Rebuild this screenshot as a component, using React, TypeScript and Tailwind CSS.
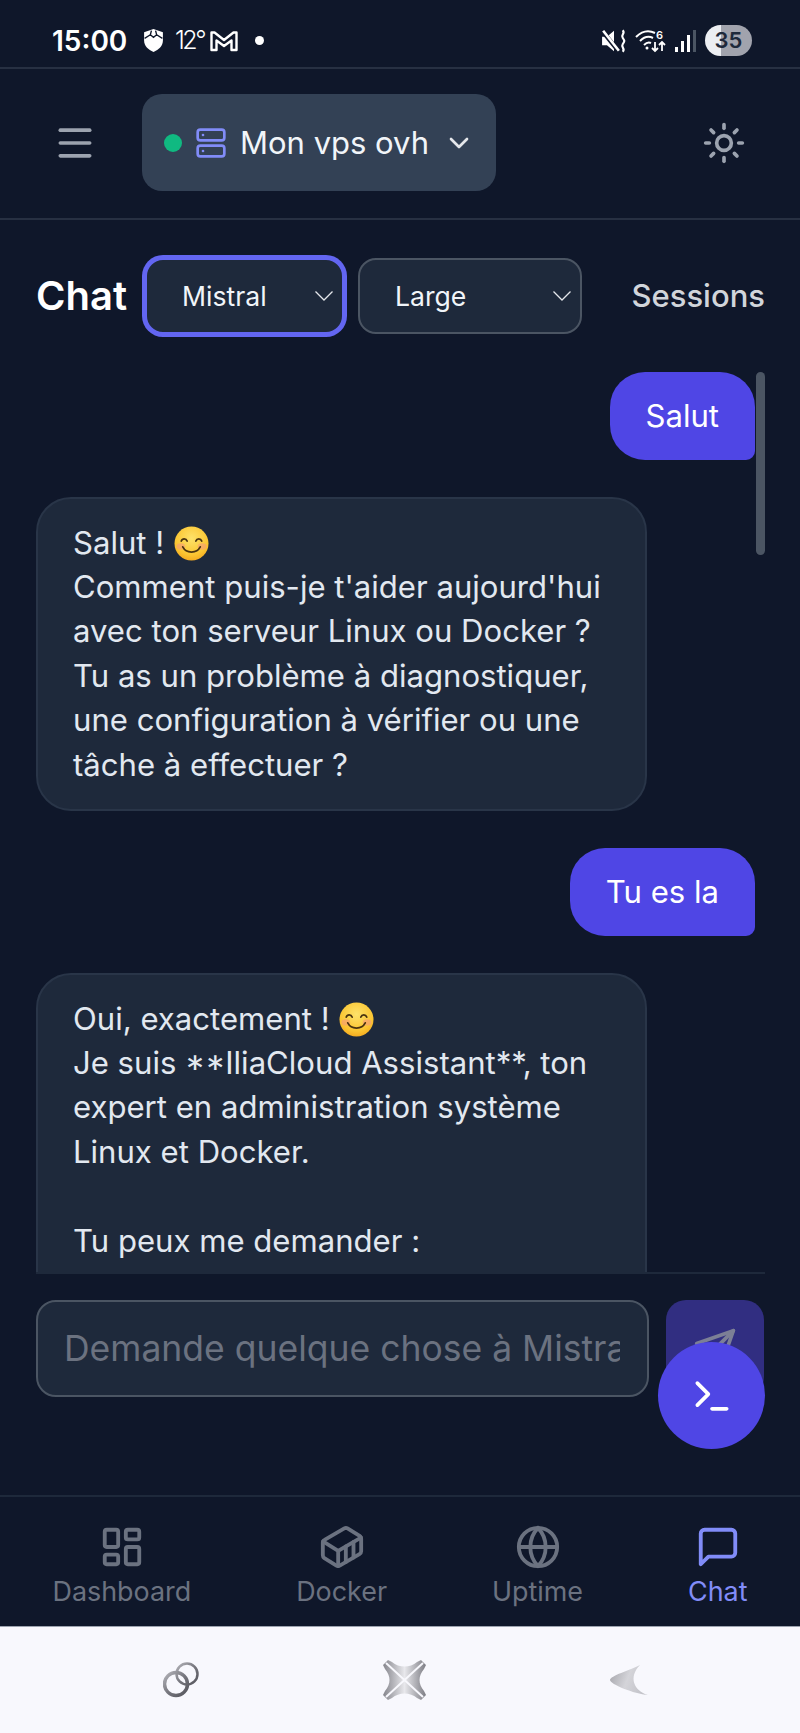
import { ChevronDown, Container, Globe, LayoutDashboard, Menu, Server, Sun, Terminal } from "lucide-react";
import type { LucideProps } from "lucide-react";
import type { ReactNode } from "react";

function ChatBubbleIcon({ size }: LucideProps) {
  return (
    <svg viewBox="0 0 24 24" width={size} height={size} fill="none" stroke="currentColor" strokeWidth="2" strokeLinecap="round" strokeLinejoin="round">
      <path d="M21 15a2 2 0 0 1-2 2H7l-4 4V5a2 2 0 0 1 2-2h14a2 2 0 0 1 2 2z" />
    </svg>
  );
}

function SendIcon() {
  return (
    <svg viewBox="0 0 24 24" width={44} height={44} fill="none" stroke="#7c7f96" strokeWidth="2" strokeLinecap="round" strokeLinejoin="round">
      <path d="m22 2-7 20-4-9-9-4Z" />
      <path d="M22 2 11 13" />
    </svg>
  );
}

function Smile() {
  return (
    <svg viewBox="0 0 36 36" className="inline-block ml-[1px] w-[35px] h-[35px] align-[-7px]">
      <defs>
        <radialGradient id="smileFace" cx="50%" cy="35%" r="70%">
          <stop offset="0%" stopColor="#fde26a" />
          <stop offset="70%" stopColor="#fbc531" />
          <stop offset="100%" stopColor="#f3a51c" />
        </radialGradient>
      </defs>
      <circle cx="18" cy="18" r="17.5" fill="url(#smileFace)" />
      <ellipse cx="7" cy="21" rx="4.5" ry="3.2" fill="#f59a7a" opacity="0.6" />
      <ellipse cx="29" cy="21" rx="4.5" ry="3.2" fill="#f59a7a" opacity="0.6" />
      <path d="M7.5 15.5c1-3 5-3 6 0M22.5 15.5c1-3 5-3 6 0" fill="none" stroke="#4a3410" strokeWidth="1.8" strokeLinecap="round" />
      <path d="M9 21.5c3.5 7 14.5 7 18 0" fill="none" stroke="#4a3410" strokeWidth="1.8" strokeLinecap="round" />
    </svg>
  );
}

function SelectBox({ label, className }: { label: string; className: string }) {
  return (
    <div className={`flex items-center justify-between h-[76px] pr-[9px] rounded-[18px] bg-[#1e293b] border-2 text-[26.6px] text-[#f1f5f9] ${className}`}>
      <span className="mt-[2px]">{label}</span>
      <svg viewBox="0 0 18 10" className="w-[18px] h-[10px]" fill="none" stroke="#e5e7eb" strokeWidth="1.3">
        <path d="M0.5 0.5 9 9 17.5 0.5" />
      </svg>
    </div>
  );
}

function AssistantBubble({ children }: { children: ReactNode }) {
  return (
    <div className="w-[611px] shrink-0 pl-[35px] pr-[36px] py-[22px] rounded-[35px] bg-[#1e293b] border-2 border-[#293548] text-[#e2e8f0] text-[31.1px] leading-[44.4px]">
      {children}
    </div>
  );
}

function UserBubble({ text }: { text: string }) {
  return (
    <div className="self-end shrink-0 px-[36px] py-[21.6px] rounded-[35px] rounded-br-[9px] bg-[#4f46e5] text-white text-[31.1px] leading-[44.4px]">
      {text}
    </div>
  );
}

const tabs = [
  { label: "Dashboard", icon: LayoutDashboard },
  { label: "Docker", icon: Container },
  { label: "Uptime", icon: Globe },
  { label: "Chat", icon: ChatBubbleIcon, active: true },
];

function StatusBar() {
  return (
    <div className="flex items-center h-[69px] pt-[14px] pl-[52px] pr-[48px] shrink-0 border-b-2 border-[#273042] text-white">
      <span className="w-[92px] text-[28px] font-semibold">15:00</span>
      <svg viewBox="0 0 18 22" className="w-[19px] h-[23px]">
        <path d="M9 0 18 3v8c0 5-4 9-9 11-5-2-9-6-9-11V3z" fill="#fff" />
        <path d="M0.5 9 6 5.5 9 8l3-2.5L17.5 9M6 5.5 7 1.500M12 5.500 11 1.500" fill="none" stroke="#0f172a" strokeWidth="1.3" />
      </svg>
      <span className="ml-[12px] w-[35px] text-[25px] tracking-[-2.5px] font-light">12°</span>
      <svg viewBox="0 0 28 22" className="w-[28px] h-[22px]" fill="none" stroke="#fff" strokeWidth="2.4" strokeLinejoin="round">
        <path d="M1.5 20V2.5h3L14 10l9.5-7.5h3V20h-5V10.5L14 16 6.5 10.5V20z" />
      </svg>
      <span className="ml-[17px] w-[9px] h-[9px] rounded-full bg-white" />
      <div className="ml-auto flex items-center">
        <svg viewBox="0 0 24 22" className="w-[26px] h-[24px]" fill="#fff">
          <path d="M1 7h4.5L12 1.5v19L5.5 15H1z" />
          <path d="M1 1.5 15 19" stroke="#0f172a" strokeWidth="4" />
          <path d="M2 1.5 16.5 20" stroke="#fff" strokeWidth="2.4" />
          <path d="M20 1c3 3-2 4 0 7s2 3 0 6 3 4 0 7" fill="none" stroke="#fff" strokeWidth="2" />
        </svg>
        <svg viewBox="0 0 32 24" className="ml-[8px] w-[32px] h-[24px]" fill="none" stroke="#fff" strokeWidth="2">
          <path d="M1 8c6-6 13-7 19-4M5 12c4-4 9-5 13-3M9 16c2-2 5-3 7-2" />
          <circle cx="12" cy="19" r="1.5" fill="#fff" stroke="none" />
          <path d="M20 13v9M17 19l3 3 3-3M27 22v-9M24 16l3-3 3 3" strokeWidth="1.8" />
          <text x="21" y="10" fontSize="11" fill="#fff" stroke="none" fontFamily="Inter, sans-serif" fontWeight="600">6</text>
        </svg>
        <div className="ml-[8px] flex items-end gap-[3px] h-[22px]">
          <span className="w-[3px] h-[5px] bg-white" />
          <span className="w-[3px] h-[11px] bg-white" />
          <span className="w-[3px] h-[17px] bg-white" />
          <span className="w-[3px] h-[22px] bg-[#4b5563]" />
        </div>
        <div className="ml-[9px] flex items-center justify-center w-[47px] h-[31px] rounded-full bg-[linear-gradient(90deg,#eceef2_34%,#a1a3ad_34%)] text-[#1e293b] text-[22px] font-semibold">
          35
        </div>
      </div>
    </div>
  );
}

function Header() {
  return (
    <div className="flex items-center h-[151px] pb-[2px] pl-[53px] pr-[54px] shrink-0 border-b-2 border-[#273042]">
      <Menu size={44} className="text-[#9ca3af]" />
      <div className="ml-[45px] flex items-center w-[354px] h-[97px] pl-[22px] rounded-[20px] bg-[#334155] text-[#f1f5f9]">
        <span className="w-[18px] h-[18px] rounded-full bg-[#10b981]" />
        <Server size={32} className="ml-[13px] text-[#818cf8]" />
        <span className="ml-[13px] mt-[2px] text-[31px]">Mon vps ovh</span>
        <ChevronDown size={32} className="ml-[14px] text-[#e5e7eb]" />
      </div>
      <Sun size={44} className="ml-auto text-[#9ca3af]" />
    </div>
  );
}

export default function App() {
  return (
    <div className="relative flex flex-col w-[800px] h-[1733px] overflow-hidden bg-[#0f172a] font-['Inter',sans-serif]">
      <StatusBar />
      <Header />

      <div className="flex-1 min-h-0 flex flex-col pl-[36px] pr-[35px] pt-[38px]">
        <div className="flex items-center shrink-0">
          <h1 className="w-[91px] text-[40px] font-semibold text-white leading-none">Chat</h1>
          <SelectBox label="Mistral" className="ml-[18px] pl-[35px] w-[199px] border-[#6366f1] ring-[3px] ring-[#6366f1]" />
          <SelectBox label="Large" className="ml-[14px] pl-[35px] w-[224px] border-[#4b5563]" />
          <span className="ml-auto text-[31px] font-medium text-[#d1d5db]">Sessions</span>
        </div>

        <div className="relative mt-[38px] h-[902px] shrink-0 overflow-hidden border-b-2 border-[#1e293b] pr-[10px]">
          <div className="flex flex-col gap-[37px]">
            <UserBubble text="Salut" />
            <AssistantBubble>
              Salut ! <Smile />
              <br />
              Comment puis-je t'aider aujourd'hui avec ton serveur Linux ou Docker ?
              <br />
              Tu as un problème à diagnostiquer, une configuration à vérifier ou une tâche à effectuer ?
            </AssistantBubble>
            <UserBubble text="Tu es la" />
            <AssistantBubble>
              Oui, exactement ! <Smile />
              <br />
              Je suis <span className="[font-feature-settings:'case']">**</span>IliaCloud Assistant**, ton expert en administration système Linux et Docker.
              <br />
              <br />
              Tu peux me demander :
              <br />
              - Diagnostiquer un problème
            </AssistantBubble>
          </div>
          <div className="absolute right-0 top-0 w-[9px] h-[183px] rounded-full bg-[#4b5563]" />
        </div>

        <div className="flex gap-[17px] mt-[26px] shrink-0">
          <input
            readOnly
            placeholder="Demande quelque chose à Mistral"
            className="w-[613px] h-[97px] pl-[26px] pr-[27px] rounded-[20px] bg-[#1e293b] border-2 border-[#4b5563] text-[35.5px] placeholder:text-[#6b7280] outline-none"
          />
          <div className="flex items-center justify-center w-[98px] h-[97px] rounded-[20px] bg-[#312e81]">
            <SendIcon />
          </div>
        </div>
      </div>

      {/* terminal shortcut floats over the send button */}
      <div className="absolute left-[658px] top-[1342px] flex items-center justify-center w-[107px] h-[107px] rounded-full bg-[#4f46e5]">
        <Terminal size={44} className="text-white" />
      </div>

      <nav className="flex justify-around h-[131px] pt-[27px] shrink-0 border-t-2 border-[#1e293b]">
        {tabs.map(({ label, icon: Icon, active }) => (
          <div key={label} className={`flex flex-col items-center ${active ? "text-[#818cf8]" : "text-[#6b7280]"}`}>
            <Icon size={46} />
            <span className="mt-[3px] text-[26.9px] leading-[36px]">{label}</span>
          </div>
        ))}
      </nav>

      {/* system navigation strip */}
      <div className="flex items-center h-[107px] pl-[163px] gap-[183px] shrink-0 bg-[#f8f8fd] border-t border-[#9ca3af]">
        <svg viewBox="0 0 36 36" className="w-[36px] h-[36px]" fill="none">
          <defs>
            <linearGradient id="chrome" x1="0" y1="0" x2="1" y2="1">
              <stop offset="0%" stopColor="#b4b4ba" />
              <stop offset="50%" stopColor="#77777e" />
              <stop offset="100%" stopColor="#55555c" />
            </linearGradient>
          </defs>
          <circle cx="24" cy="12" r="10.5" stroke="url(#chrome)" strokeWidth="2.5" />
          <circle cx="13" cy="22" r="11.5" stroke="url(#chrome)" strokeWidth="3.5" />
        </svg>
        <svg viewBox="0 0 45 42" className="w-[45px] h-[42px]">
          <defs>
            <linearGradient id="silverX" x1="0" y1="0" x2="1" y2="0">
              <stop offset="0%" stopColor="#85858c" />
              <stop offset="50%" stopColor="#e8e8ec" />
              <stop offset="100%" stopColor="#7d7d84" />
            </linearGradient>
          </defs>
          <path d="M6 1 10 3C17 9 28 9 35 3l4-2 5 5-2 4C36 17 36 25 42 32l2 4-5 5-4-2C28 33 17 33 10 39l-4 2-5-5 2-4C9 25 9 17 3 10L1 6z" fill="url(#silverX)" />
          <path d="M4 4 41 38M41 4 4 38" stroke="#f8f8fd" strokeWidth="2" />
        </svg>
        <svg viewBox="0 0 38 30" className="w-[38px] h-[30px]">
          <defs>
            <linearGradient id="silverMoon" x1="0" y1="0" x2="1" y2="0.3">
              <stop offset="0%" stopColor="#a2a2a8" />
              <stop offset="55%" stopColor="#d4d4d9" />
              <stop offset="100%" stopColor="#c4c4ca" />
            </linearGradient>
          </defs>
          <path d="M30 0C20 5 0 11 0 15c0 4 24 14 38 15C24 26 18 12 30 0z" fill="url(#silverMoon)" />
        </svg>
      </div>
    </div>
  );
}
